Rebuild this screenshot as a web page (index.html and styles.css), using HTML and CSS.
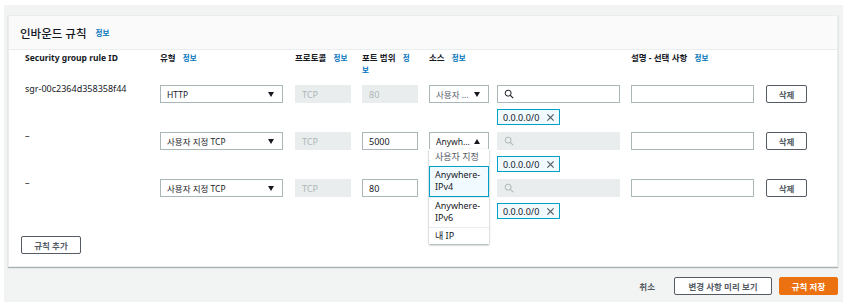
FILE: index.html
```html
<!DOCTYPE html>
<html lang="ko">
  <head>
    <meta charset="UTF-8" />
    <title>인바운드 규칙 편집</title>
    <link rel="stylesheet" href="styles.css">
  </head>
  <body>
    <div class="page">
      <section class="card">
        <header class="card-head">
          <h2>인바운드 규칙</h2>
          <a class="info" href="#">정보</a>
        </header>
        <div class="card-body">
          <div class="rules">
            <div class="th">Security group rule ID</div>
            <div class="th">유형 <a class="info" href="#">정보</a></div>
            <div class="th">프로토콜 <a class="info" href="#">정보</a></div>
            <div class="th narrow">포트 범위 <a class="info" href="#">정보</a></div>
            <div class="th">소스 <a class="info" href="#">정보</a></div>
            <div class="th"></div>
            <div class="th">설명 - 선택 사항 <a class="info" href="#">정보</a></div>
            <div class="th"></div>

            <!-- rule 1 -->
            <div class="rule-id">sgr-00c2364d358358f44</div>
            <div><div class="select wide"><span>HTTP</span><i class="caret"></i></div></div>
            <div><div class="field disabled">TCP</div></div>
            <div><div class="field disabled">80</div></div>
            <div><div class="select"><span>사용자 ...</span><i class="caret"></i></div></div>
            <div>
              <div class="search">
                <svg viewBox="0 0 12 12" width="10" height="10"><circle cx="5" cy="5" r="3.6" fill="none" stroke="currentColor" stroke-width="1.2"/><path d="M7.6 7.6L11 11" stroke="currentColor" stroke-width="1.3"/></svg>
              </div>
              <div class="token">0.0.0.0/0 <svg viewBox="0 0 10 10" width="9" height="9"><path d="M1.5 1.5l7 7M8.5 1.5l-7 7" stroke="currentColor" stroke-width="1.3"/></svg></div>
            </div>
            <div><div class="field"></div></div>
            <div><button class="btn">삭제</button></div>

            <!-- rule 2 -->
            <div class="rule-id">–</div>
            <div><div class="select wide"><span>사용자 지정 TCP</span><i class="caret"></i></div></div>
            <div><div class="field disabled">TCP</div></div>
            <div><div class="field">5000</div></div>
            <div class="source">
              <div class="select open"><span>Anywh...</span><i class="caret up"></i></div>
              <ul class="menu">
                <li class="muted">사용자 지정</li>
                <li class="active">Anywhere-<br>IPv4</li>
                <li>Anywhere-<br>IPv6</li>
                <li>내 IP</li>
              </ul>
            </div>
            <div>
              <div class="search disabled">
                <svg viewBox="0 0 12 12" width="10" height="10"><circle cx="5" cy="5" r="3.6" fill="none" stroke="currentColor" stroke-width="1.2"/><path d="M7.6 7.6L11 11" stroke="currentColor" stroke-width="1.3"/></svg>
              </div>
              <div class="token">0.0.0.0/0 <svg viewBox="0 0 10 10" width="9" height="9"><path d="M1.5 1.5l7 7M8.5 1.5l-7 7" stroke="currentColor" stroke-width="1.3"/></svg></div>
            </div>
            <div><div class="field"></div></div>
            <div><button class="btn">삭제</button></div>

            <!-- rule 3 -->
            <div class="rule-id">–</div>
            <div><div class="select wide"><span>사용자 지정 TCP</span><i class="caret"></i></div></div>
            <div><div class="field disabled">TCP</div></div>
            <div><div class="field">80</div></div>
            <div></div>
            <div>
              <div class="search disabled">
                <svg viewBox="0 0 12 12" width="10" height="10"><circle cx="5" cy="5" r="3.6" fill="none" stroke="currentColor" stroke-width="1.2"/><path d="M7.6 7.6L11 11" stroke="currentColor" stroke-width="1.3"/></svg>
              </div>
              <div class="token">0.0.0.0/0 <svg viewBox="0 0 10 10" width="9" height="9"><path d="M1.5 1.5l7 7M8.5 1.5l-7 7" stroke="currentColor" stroke-width="1.3"/></svg></div>
            </div>
            <div><div class="field"></div></div>
            <div><button class="btn">삭제</button></div>
          </div>
          <button class="btn add">규칙 추가</button>
        </div>
      </section>
      <div class="actions">
        <a class="cancel" href="#">취소</a>
        <button class="btn preview">변경 사항 미리 보기</button>
        <button class="btn primary">규칙 저장</button>
      </div>
    </div>
  </body>
</html>
```

FILE: styles.css
```css
body {
  margin: 0;
  background-color: #fff;
  font-family: "Noto Sans", "Noto Sans CJK KR", sans-serif;
  font-size: 9px;
  color: #16191f;
}

.page {
  margin: 5px 10px 0 4px;
  padding: 10px 5px 5px 4px;
  height: 282px;
  background-color: #f2f3f3;
}

.card {
  background-color: #fff;
  border: 1px solid #eaeded;
  box-shadow: 0 1px 1px rgba(0, 28, 36, 0.3);
}

.card-head {
  display: flex;
  align-items: center;
  height: 33px;
  padding: 0 11px;
  background-color: #fafafa;
  border-bottom: 1px solid #eaeded;
}

.card-head h2 {
  margin: 0 4px 0 0;
  font-size: 11.5px;
  font-weight: 500;
}

.info {
  color: #0073bb;
  font-size: 7.5px;
  font-weight: 700;
  text-decoration: none;
  margin-left: 5px;
}

.card-body {
  padding: 2px 0 12px 16px;
}

.rules {
  display: grid;
  grid-template-columns: 135px 135px 67px 67px 68px 134px 135px 41px;
  row-gap: 7px;
  align-items: start;
}

.th {
  font-weight: 700;
  font-size: 8.5px;
  line-height: 12px;
  margin-bottom: 2px;
  height: 24px;
  padding-right: 12px;
}

.th.narrow {
  padding-right: 14px;
  word-break: break-all;
}

.rule-id {
  line-height: 12px;
  margin-top: -2px;
}

.select,
.field,
.search {
  box-sizing: border-box;
  height: 18px;
  border: 1px solid #aab7b8;
  background-color: #fff;
  display: flex;
  align-items: center;
  padding: 0 6px;
  width: 56px;
}

.select {
  width: 60px;
  justify-content: space-between;
  color: #545b64;
  font-size: 8.5px;
}

.select.wide,
.select.open {
  color: #16191f;
}

.select.wide {
  width: 123px;
}

.caret {
  width: 0;
  height: 0;
  border-left: 3.5px solid transparent;
  border-right: 3.5px solid transparent;
  border-top: 5px solid #16191f;
  margin-right: 2px;
}

.caret.up {
  border-top: 0;
  border-bottom: 5px solid #16191f;
}

.field {
  color: #16191f;
}

.field.disabled {
  background-color: #eaeded;
  border-color: #eaeded;
  color: #aab7b8;
}

.rules > div:nth-child(8n+7) .field {
  width: 123px;
}

.search {
  width: 123px;
  color: #16191f;
}

.search.disabled {
  background-color: #eaeded;
  border-color: #eaeded;
  color: #aab7b8;
}

.token {
  box-sizing: border-box;
  display: inline-flex;
  align-items: center;
  gap: 7px;
  height: 16px;
  margin-top: 6px;
  padding: 0 4px 0 5px;
  background-color: #f1faff;
  border: 1px solid #00a1c9;
  color: #16191f;
}

.token svg {
  color: #545b64;
}

.source {
  position: relative;
}

.menu {
  position: absolute;
  left: 0;
  top: 17px;
  width: 60px;
  box-sizing: border-box;
  margin: 0;
  padding: 0;
  list-style-type: none;
  background-color: #fff;
  box-shadow: 0 1px 2px rgba(0, 28, 36, 0.4);
  z-index: 2;
}

.menu li {
  padding: 2px 6px;
  line-height: 12.5px;
  color: #16191f;
  border-top: 1px solid #eaeded;
}

.menu li.muted {
  color: #545b64;
  border-top: 0;
}

.menu li.active {
  background-color: #f1faff;
  border: 1px solid #00a1c9;
  padding: 2px 5px;
}

.btn {
  box-sizing: border-box;
  height: 18px;
  padding: 0 6px;
  font-family: inherit;
  font-size: 8.5px;
  font-weight: 700;
  color: #545b64;
  background-color: #fff;
  border: 1px solid #545b64;
  border-radius: 2px;
}

.rules .btn {
  width: 41px;
}

.add {
  width: 60px;
  margin: 17px 0 0 -4px;
}

.actions {
  display: flex;
  justify-content: flex-end;
  align-items: center;
  margin-top: 10px;
}

.cancel {
  color: #545b64;
  font-weight: 700;
  font-size: 8.5px;
  text-decoration: none;
  margin-right: 19px;
}

.preview {
  width: 98px;
  margin-right: 7px;
}

.primary {
  width: 59px;
  background-color: #ec7211;
  border-color: #ec7211;
  color: #fff;
}
```
